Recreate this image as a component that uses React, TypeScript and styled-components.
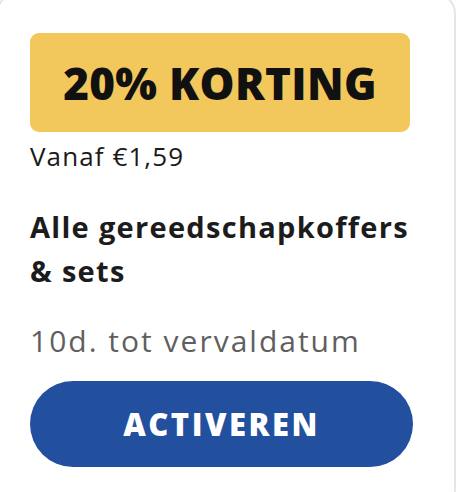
import React from 'react';
import styled, { createGlobalStyle } from 'styled-components';

const GlobalStyle = createGlobalStyle`
  html, body {
    margin: 0;
    padding: 0;
    background: #ffffff;
    overflow: hidden;
  }
  body {
    font-family: "Open Sans", Lato, sans-serif;
  }
`;

const Card = styled.div`
  box-sizing: border-box;
  width: 460px;
  margin: -8px 0 0 -4px;
  padding: 39px 44px 20px 32px;
  border: 2px solid #e6e6e6;
  border-radius: 22px;
  background: #fff;
  display: flex;
  flex-direction: column;
  height: 520px;
`;

const Badge = styled.div`
  height: 99px;
  border-radius: 9px;
  background: #f2c75c;
  display: flex;
  align-items: center;
  justify-content: center;
  font-size: 44px;
  font-weight: 800;
  color: #111;
  letter-spacing: 0.3px;
`;

const Price = styled.div`
  margin-top: 9px;
  font-size: 26px;
  color: #1a1a1a;
  line-height: 30px;
  letter-spacing: 1.1px;
`;

const Title = styled.div`
  margin-top: 34px;
  font-size: 29px;
  font-weight: 700;
  color: #1c1c1c;
  line-height: 44px;
  letter-spacing: 1.3px;
`;

const Expiry = styled.div`
  margin-top: 30px;
  font-size: 30px;
  color: #5f5f5f;
  line-height: 36px;
  letter-spacing: 2px;
`;

const Button = styled.button`
  margin-top: 22px;
  height: 86px;
  width: 383px;
  border: none;
  border-radius: 43px;
  background: #22509e;
  color: #fff;
  font-family: "Open Sans", Lato, sans-serif;
  font-size: 31px;
  font-weight: 800;
  letter-spacing: 2.5px;
  cursor: pointer;
`;

export default function App() {
  return (
    <>
      <GlobalStyle />
      <Card>
        <Badge>20% KORTING</Badge>
        <Price>Vanaf €1,59</Price>
        <Title>
          Alle gereedschapkoffers
          <br />& sets
        </Title>
        <Expiry>10d. tot vervaldatum</Expiry>
        <Button>ACTIVEREN</Button>
      </Card>
    </>
  );
}
